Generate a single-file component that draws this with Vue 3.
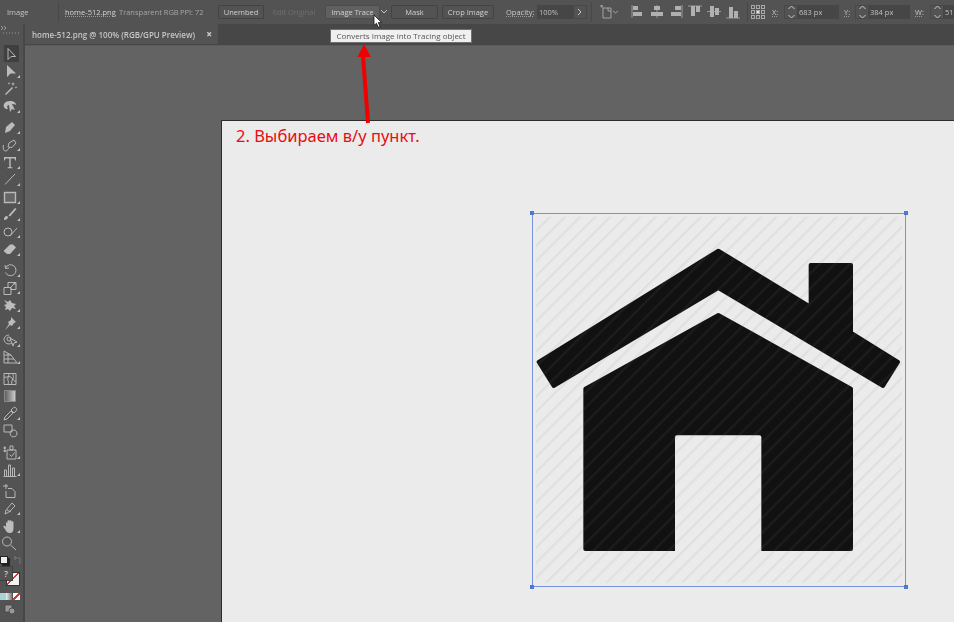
<script setup>
const groups = [
  [
    { d: "M6 2.500v11l3-3h4.500z", kind: "line" },
    { d: "M5 2v12l3.500-3.500H14z", kind: "solid", corner: true },
    { d: "M3 14L10 7l1 1-7 7zM11 2l.6 1.600L13 4l-1.400.5L11 6l-.6-1.500L9 4l1.400-.4zM14 6l.4 1 1 .4-1 .4-.4 1-.4-1-1-.4 1-.4zM7 2l.4 1 1 .4-1 .4-.4 1-.4-1-1-.4 1-.4z", kind: "solid" },
    { d: "M8 3c4 0 6 2 6 4-1-1-3-1-4-1l3 6-3-1-2 3-1-7c-1 0-2 1-2 2l1 2H4C2 10 1 8 2 6c1-2 3-3 6-3z", kind: "solid", corner: true },
  ],
  [
    { d: "M3 14l1-6 6-5 3 3-5 6z", kind: "solid", corner: true },
    { d: "M6 10l1-4 5-3 2 3-4 4.500zM1.500 8c-1 3 0 6 2 6 3 0 2-3 4-3", kind: "line", corner: true },
    { d: "M2 3h12v3.500h-.8l-.7-2H8.700V13l1.800.5v.7H5.500v-.7L7.300 13V4.500H3.500l-.7 2H2z", kind: "solid", corner: true },
    { d: "M3 13.500L13 3", kind: "line", corner: true },
    { d: "M2.500 3.500h11v10h-11z", kind: "box", corner: true },
    { d: "M2 14c0-3 1-4 3-4l1 1c0 2-2 3-4 3zM6.500 9.500L13 2l1.500 1-6.500 7.500z", kind: "solid", corner: true },
    { d: "M6 4a4 4 0 1 0 4 4 4 4 0 0 0-4-4zM8 12l7-8", kind: "line", corner: true },
    { d: "M1.500 10L8 3.500h3l3 3L8 13H5z", kind: "solid", corner: true },
  ],
  [
    { d: "M3.500 6a5.500 5.500 0 1 1 0 4.500M3 3l.5 3.500L7 6", kind: "line", corner: true },
    { d: "M2 7.500h7v7H2zM6 2.500h8v7H9V7.500H6zM9 7l4-4M11 3h2v2", kind: "line", corner: true },
    { d: "M2 3l4 2 2-2 2 3 4 1-2 2 2 3-4-1-2 3-2-2-3 1 1-3-2-2 3-1z", kind: "solid", corner: true },
    { d: "M9 2l5 5-2 1-2 3-2-1-5 5 4-6-1-2 3-2z", kind: "solid", corner: true },
    { d: "M7 3a5 4.500 0 1 0 0 9c1 0 2-.5 3-1M5 7a2 2 0 1 0 4 0 2 2 0 0 0-4 0M8 6l7 4-3 1-1 3z", kind: "line", corner: true },
    { d: "M2 2l7 4 6 8H2zM2 6h7M2 10h10M6 4v10", kind: "line", corner: true },
  ],
  [
    { d: "M2 2.500h12v11H2zM2 6c3 1 5-2 8 1s2 4 4 3M7 2.500c0 3-2 5-1 7s0 3 0 4M11 2.500c0 3 1 3 0 5s-2 4-1 6", kind: "line" },
    { d: "M2.500 2.500h11v11h-11z", kind: "gradient" },
    { d: "M2 14l1-3 6-6 2 2-6 6zM9 4l2-2c1-1 2-1 3 0s1 2 0 3l-2 2z", kind: "line", corner: true },
    { d: "M2 2h8v7H2zM9 8a3.500 3.500 0 1 0 6 3 3.500 3.500 0 0 0-6-3z", kind: "line" },
  ],
  [
    { d: "M2 3h1.500v1.500H2zM2 6h1.500v1.500H2zM5 6h9v9H5zM8 2h3v4H8zM7.500 10.500l2 2 3-4", kind: "line", corner: true },
    { d: "M1.500 14.500h13M2.500 14V8h2v6M6.500 14V3h2v11M10.500 14V6h2v8", kind: "line", corner: true },
  ],
  [
    { d: "M4 1v5M1 3h5M6 5.500h4l3 3v6H4V8", kind: "line" },
    { d: "M3 14l1-4 6-7 3 3-6 6zM5 10l4 2", kind: "line", corner: true },
    { d: "M4 9V5c0-1 1.500-1 1.500 0V3c0-1 2-1 2 0v3V3c0-1 2-1 2 0v3V4c0-1 2-1 2 0v6c0 3-1 5-4 5-2 0-3-1-4-3L1.500 9c-.5-1 1-2 2.500 0z", kind: "solid", corner: true },
    { d: "M9.500 6.500a4.500 4.500 0 1 1-9 0 4.500 4.500 0 0 1 9 0zM8.500 10l5.500 5", kind: "line" },
  ],
];
const alignIcons = [
  { rule: "M1 0v13", blocks: "M2 1h5v4H2zM2 7h9v4H2z" },
  { rule: "M7 0v13", blocks: "M4 1h6v4H4zM1 7h12v4H1z" },
  { rule: "M13 0v13", blocks: "M6 1h6v4H6zM2 7h10v4H2z" },
  { rule: "M0 1h14", blocks: "M3 1h4v10H3zM8 1h4v6H8z" },
  { rule: "M0 6.500h14", blocks: "M3 1h4v11H3zM8 3h4v7H8z" },
  { rule: "M0 13h14", blocks: "M3 2h4v11H3zM8 6h4v7H8z" },
];
</script>

<template>
  <div class="app">
    <header class="topbar">
      <span class="doc-type">Image</span>
      <i class="sep first"></i>
      <span class="file">home-512.png</span>
      <span class="meta">Transparent RGB</span>
      <span class="meta ppi">PPI: 72</span>
      <button class="btn unembed">Unembed</button>
      <button class="btn ghost">Edit Original</button>
      <button class="btn trace">Image Trace</button>
      <svg class="chev" width="9" height="6" viewBox="0 0 9 6"><path d="M1 1l3 3 3-3" /></svg>
      <button class="btn mask">Mask</button>
      <button class="btn crop">Crop Image</button>
      <span class="field-label opacity">Opacity:</span>
      <span class="input op-input">100%</span>
      <span class="more">
        <svg width="6" height="8" viewBox="0 0 6 8"><path d="M1 1l3 3-3 3" /></svg>
      </span>
      <i class="sep"></i>
      <svg class="transform-ico" width="20" height="14" viewBox="0 0 20 14">
        <path d="M0 1h3M2 0v3M3 3h8v10H3zM8 3v3h3M13 6l2.500 2L18 6" />
      </svg>
      <svg v-for="(p, i) in alignIcons" :key="i" class="align-ico" width="14" height="14" viewBox="0 0 14 14">
        <path class="align-rule" :d="p.rule" />
        <path :d="p.blocks" />
      </svg>
      <i class="sep grid-sep"></i>
      <span class="ref-grid"><i v-for="n in 9" :key="n" :class="{ mid: n === 5 }"></i></span>
      <span class="field-label coord x">X:</span>
      <span class="stepper">
        <svg width="7" height="14" viewBox="0 0 7 14"><path d="M.5 4L3.500 1l3 3M.5 10l3 3 3-3" /></svg>
      </span>
      <span class="input coord-input">683 px</span>
      <span class="field-label coord y">Y:</span>
      <span class="stepper">
        <svg width="7" height="14" viewBox="0 0 7 14"><path d="M.5 4L3.500 1l3 3M.5 10l3 3 3-3" /></svg>
      </span>
      <span class="input coord-input">384 px</span>
      <span class="field-label coord w">W:</span>
      <span class="stepper">
        <svg width="7" height="14" viewBox="0 0 7 14"><path d="M.5 4L3.500 1l3 3M.5 10l3 3 3-3" /></svg>
      </span>
      <span class="input coord-input">51</span>
    </header>

    <div class="workspace">
      <aside class="tools">
        <div class="tools-head">
          <svg width="6" height="4" viewBox="0 0 6 4"><path d="M0 0l2 2-2 2M3 0l2 2-2 2" /></svg>
          <span class="grip"></span>
        </div>
        <div class="tool-active-spacer"></div>
        <svg class="defs" width="0" height="0">
          <defs>
            <linearGradient id="tool-grad">
              <stop offset="0" stop-color="#5a5a5a" />
              <stop offset="1" stop-color="#cfcfcf" />
            </linearGradient>
          </defs>
        </svg>
        <div v-for="(group, g) in groups" :key="g" class="tool-group">
          <div
            v-for="(t, i) in group"
            :key="i"
            class="tool"
            :class="{ active: g === 0 && i === 0, corner: t.corner }"
          >
            <svg width="16" height="16" viewBox="0 0 16 16">
              <path :d="t.d" :class="t.kind" />
            </svg>
          </div>
        </div>
        <div class="colors">
          <div class="color-top">
            <span class="mini-fill"></span>
            <svg class="swap" width="10" height="10" viewBox="0 0 10 10"><path d="M3 1L1 3l2 2M1 3h6v6" /></svg>
          </div>
          <div class="color-main">
            <span class="question">?</span>
            <span class="none-box"></span>
          </div>
          <div class="color-modes">
            <span class="mode-color"></span>
            <span class="mode-grad"></span>
            <span class="mode-none"></span>
          </div>
          <svg class="screen-mode" width="12" height="12" viewBox="0 0 12 12">
            <path d="M1 2h7v7H1z" />
            <circle cx="8" cy="8" r="3" />
          </svg>
        </div>
      </aside>

      <main class="main">
        <div class="tabs">
          <div class="tab">
            <span>home-512.png @ 100% (RGB/GPU Preview)</span>
            <b class="tab-close">×</b>
          </div>
        </div>
        <div class="canvas">
          <div class="artboard">
            <p class="note">2. Выбираем в/у пункт.</p>
            <div class="placed">
              <svg class="home" viewBox="39 42 1116 1116" width="372" height="372">
                <defs>
                  <pattern id="hatch" width="32" height="32" patternUnits="userSpaceOnUse" patternTransform="rotate(45)">
                    <rect width="7" height="32" fill="#808080" fill-opacity="0.1" />
                  </pattern>
                </defs>
                <g fill="#111" stroke="#111" stroke-width="12" stroke-linejoin="round">
                  <path d="M595 152L872 321V195H993V398L1134 486L1089 558L595 264L101 558L56 486Z" />
                  <path d="M595 345L993 566V1047H196V566Z" />
                </g>
                <rect x="465" y="706" width="259" height="360" rx="6" fill="#ebebeb" />
                <rect x="48" y="50" width="1098" height="1098" fill="url(#hatch)" />
              </svg>
              <i class="handle tl"></i>
              <i class="handle tr"></i>
              <i class="handle bl"></i>
              <i class="handle br"></i>
            </div>
          </div>
        </div>
      </main>
    </div>

    <div class="tooltip">Converts Image into Tracing object</div>
    <svg class="red-arrow" width="24" height="82" viewBox="0 0 24 82">
      <path d="M10 14l5 67" />
      <polygon points="11,2 4.500,15 18,15" />
    </svg>
    <svg class="cursor" width="11" height="15" viewBox="0 0 11 15">
      <path d="M1 1v10.500l2.500-2.200 1.700 4 1.800-.8-1.700-3.900h3.400z" />
    </svg>
  </div>
</template>

<style scoped>
.app {
  position: relative;
  width: 954px;
  height: 622px;
  overflow: hidden;
  display: flex;
  flex-direction: column;
  background: #636363;
  font-family: "Open Sans", "Liberation Sans", sans-serif;
  font-size: 7.500px;
  color: #c8c8c8;
}

.topbar {
  height: 24px;
  flex: none;
  display: flex;
  align-items: center;
  background: #535353;
  white-space: nowrap;
  filter: blur(0.3px);
}

.topbar > * {
  flex: none;
}

.doc-type {
  width: 58px;
  padding-left: 7px;
  box-sizing: border-box;
  color: #c4c4c4;
}

.sep {
  width: 1px;
  height: 20px;
  background: #484848;
  margin: 0 4px;
}

.sep.first {
  margin: 0 6px 0 0;
}

.file {
  width: 54px;
  color: #d4d4d4;
  text-decoration: underline dotted #999;
}

.meta {
  width: 61px;
  color: #a6a6a6;
}

.meta.ppi {
  width: 38px;
}

.btn {
  height: 14px;
  padding: 0;
  font: inherit;
  color: #d2d2d2;
  background: #535353;
  border: 1px solid #434343;
  border-radius: 1px;
}

.unembed {
  width: 46px;
}

.ghost {
  width: 52px;
  margin-left: 4px;
  color: #707070;
  border-color: transparent;
}

.trace {
  width: 55px;
  margin-left: 5px;
  background: #606060;
  border-color: #4c4c4c;
}

.chev {
  fill: none;
  stroke: #c8c8c8;
}

.mask {
  width: 47px;
  margin-left: 2px;
}

.crop {
  width: 52px;
  margin-left: 4px;
}

.field-label {
  color: #c8c8c8;
  text-decoration: underline dotted #999;
}

.opacity {
  width: 31px;
  margin-left: 12px;
}

.input {
  height: 14px;
  line-height: 14px;
  background: #464646;
  color: #c0c0c0;
  box-sizing: border-box;
  padding-left: 2px;
}

.op-input {
  width: 37px;
}

.more {
  width: 13px;
  height: 14px;
  display: flex;
  align-items: center;
  justify-content: center;
  border: 1px solid #484848;
  border-left: 0;
  box-sizing: border-box;
}

.more svg {
  fill: none;
  stroke: #c8c8c8;
}

.transform-ico {
  margin: 0 11px 0 4px;
  fill: none;
  stroke: #b8b8b8;
  stroke-width: 0.8;
}

.align-ico {
  margin-right: 5px;
  fill: #b0b0b0;
}

.align-rule {
  fill: none;
  stroke: #9a9a9a;
}

.grid-sep {
  margin: 0 3px 0 2px;
}

.ref-grid {
  width: 14px;
  height: 14px;
  display: grid;
  grid-template-columns: repeat(3, 4px);
  grid-auto-rows: 4px;
  gap: 1px;
}

.ref-grid i {
  border: 1px solid #a8a8a8;
  box-sizing: border-box;
}

.ref-grid i.mid {
  background: #e0e0e0;
}

.coord {
  margin-left: 7px;
  width: 12px;
}

.coord.y {
  margin-left: 5px;
  width: 11px;
}

.coord.w {
  margin-left: 5px;
  width: 15px;
}

.stepper {
  width: 13px;
  height: 14px;
  display: flex;
  align-items: center;
  justify-content: center;
  border: 1px solid #484848;
  border-right: 0;
  box-sizing: border-box;
}

.stepper svg {
  fill: none;
  stroke: #c8c8c8;
}

.coord-input {
  width: 42px;
}

.workspace {
  flex: 1;
  display: flex;
  min-height: 0;
}

.tools {
  width: 23px;
  flex: none;
  background: #535353;
  border-right: 2px solid #474747;
  display: flex;
  flex-direction: column;
}

.tools-head {
  height: 10px;
  flex: none;
  display: flex;
  flex-direction: column;
  gap: 2px;
  padding: 2px 0 0 1px;
  box-sizing: border-box;
}

.tools-head svg {
  fill: none;
  stroke: #bbb;
  stroke-width: 0.7;
}

.grip {
  width: 16px;
  margin-left: 2px;
  height: 2px;
  background: repeating-linear-gradient(90deg, #777 0 1px, transparent 1px 3px);
}

.tool-active-spacer {
  height: 10px;
  flex: none;
}

.defs {
  position: absolute;
}

.tool-group {
  display: flex;
  flex-direction: column;
  padding: 1px 0 3px;
}

.tool {
  position: relative;
  height: 17.400px;
  display: flex;
  align-items: center;
  padding-left: 1.500px;
}

.tool.active {
  width: 17.500px;
  background: linear-gradient(90deg, #535353 0 3px, #3f3f3f 5px);
  border-radius: 1px;
}

.tool.corner::after {
  content: "";
  position: absolute;
  right: 3px;
  bottom: 2px;
  border-style: solid;
  border-width: 0 0 3px 3px;
  border-color: transparent transparent #c0c0c0 transparent;
}

.tool svg {
  filter: blur(0.3px);
}

.line {
  fill: none;
  stroke: #b8b8b8;
  stroke-width: 1;
}

.solid {
  fill: #bcbcbc;
  stroke: none;
}

.box {
  fill: #666;
  stroke: #b8b8b8;
  stroke-width: 1.400;
}

.gradient {
  fill: url(#tool-grad);
  stroke: #8a8a8a;
}

.colors {
  position: relative;
  display: flex;
  flex-direction: column;
}

.color-top {
  height: 10px;
  display: flex;
  align-items: center;
  gap: 5px;
}

.mini-fill {
  width: 6px;
  height: 6px;
  background: #eee;
  border: 1px solid #222;
  box-shadow: 2px 2px 0 #222;
}

.swap {
  fill: none;
  stroke: #777;
}

.color-main {
  height: 28px;
  position: relative;
}

.question {
  position: absolute;
  left: 0;
  top: 1px;
  width: 12px;
  height: 13px;
  line-height: 13px;
  text-align: center;
  font-size: 9px;
  font-weight: 600;
  color: #ccc;
  background: #535353;
  border: 1px solid #3e3e3e;
  border-left: 0;
  z-index: 1;
}

.none-box {
  position: absolute;
  left: 6px;
  top: 7px;
  width: 14px;
  height: 14px;
  background:
    linear-gradient(to top left, transparent 46%, #d33 46% 58%, transparent 58%),
    #f2f2f2;
  border: 1px solid #333;
  box-sizing: border-box;
}

.color-modes {
  display: flex;
  height: 7px;
}

.mode-color {
  width: 6px;
  background: #a7d3d3;
}

.mode-grad {
  width: 6px;
  background: linear-gradient(90deg, #eee, #777);
}

.mode-none {
  width: 7px;
  margin-left: 0.500px;
  background: linear-gradient(to top left, #fff 42%, #d33 42% 58%, #fff 58%);
}

.screen-mode {
  margin: 3px 0 0 4px;
  fill: #999;
  stroke: #444;
  stroke-width: 0.8;
}

.main {
  flex: 1;
  min-width: 0;
  display: flex;
  flex-direction: column;
}

.tabs {
  height: 21px;
  flex: none;
  background: #474747;
  display: flex;
}

.tab {
  width: 193px;
  height: 20px;
  background: #535353;
  display: flex;
  align-items: center;
  justify-content: space-between;
  box-sizing: border-box;
  padding: 0 6px 0 7px;
  font-size: 8px;
  font-weight: 600;
  color: #c6c6c6;
  filter: blur(0.3px);
}

.tab-close {
  font-size: 10px;
}

.canvas {
  flex: 1;
  min-height: 0;
  background: #636363;
  padding: 74px 0 0 196px;
  border-top: 1px solid #5b5b5b;
}

.artboard {
  height: 600px;
  background: #ebebeb;
  border-top: 1px solid #2c2c2c;
  border-left: 1px solid #2c2c2c;
  padding: 4px 0 0 14px;
}

.note {
  margin: 0;
  font-size: 16.500px;
  line-height: 22px;
  color: #e80d12;
  font-family: "Noto Sans", "Open Sans", sans-serif;
}

.placed {
  position: relative;
  width: 372px;
  height: 372px;
  margin: 67px 0 0 297px;
  outline: 1px solid #7592da;
}

.home {
  display: block;
}

.handle {
  position: absolute;
  width: 4px;
  height: 4px;
  background: #4f76d4;
}

.tl { left: -3px; top: -3px; }
.tr { right: -3px; top: -3px; }
.bl { left: -3px; bottom: -3px; }
.br { right: -3px; bottom: -3px; }

.tooltip {
  position: absolute;
  left: 330px;
  top: 29px;
  width: 142px;
  height: 13.500px;
  box-sizing: border-box;
  line-height: 11.500px;
  text-align: center;
  background: #f0f0f0;
  border: 1px solid #707070;
  font-size: 8px;
  color: #555;
  white-space: nowrap;
  filter: blur(0.25px);
}

.red-arrow {
  position: absolute;
  left: 353px;
  top: 42px;
}

.red-arrow path {
  fill: none;
  stroke: #f00000;
  stroke-width: 4;
}

.red-arrow polygon {
  fill: #f00000;
}

.cursor {
  position: absolute;
  left: 373px;
  top: 14px;
  fill: #fff;
  stroke: #111;
  stroke-width: 0.8;
}
</style>

<style>
html, body {
  margin: 0;
  background: #636363;
}
</style>
